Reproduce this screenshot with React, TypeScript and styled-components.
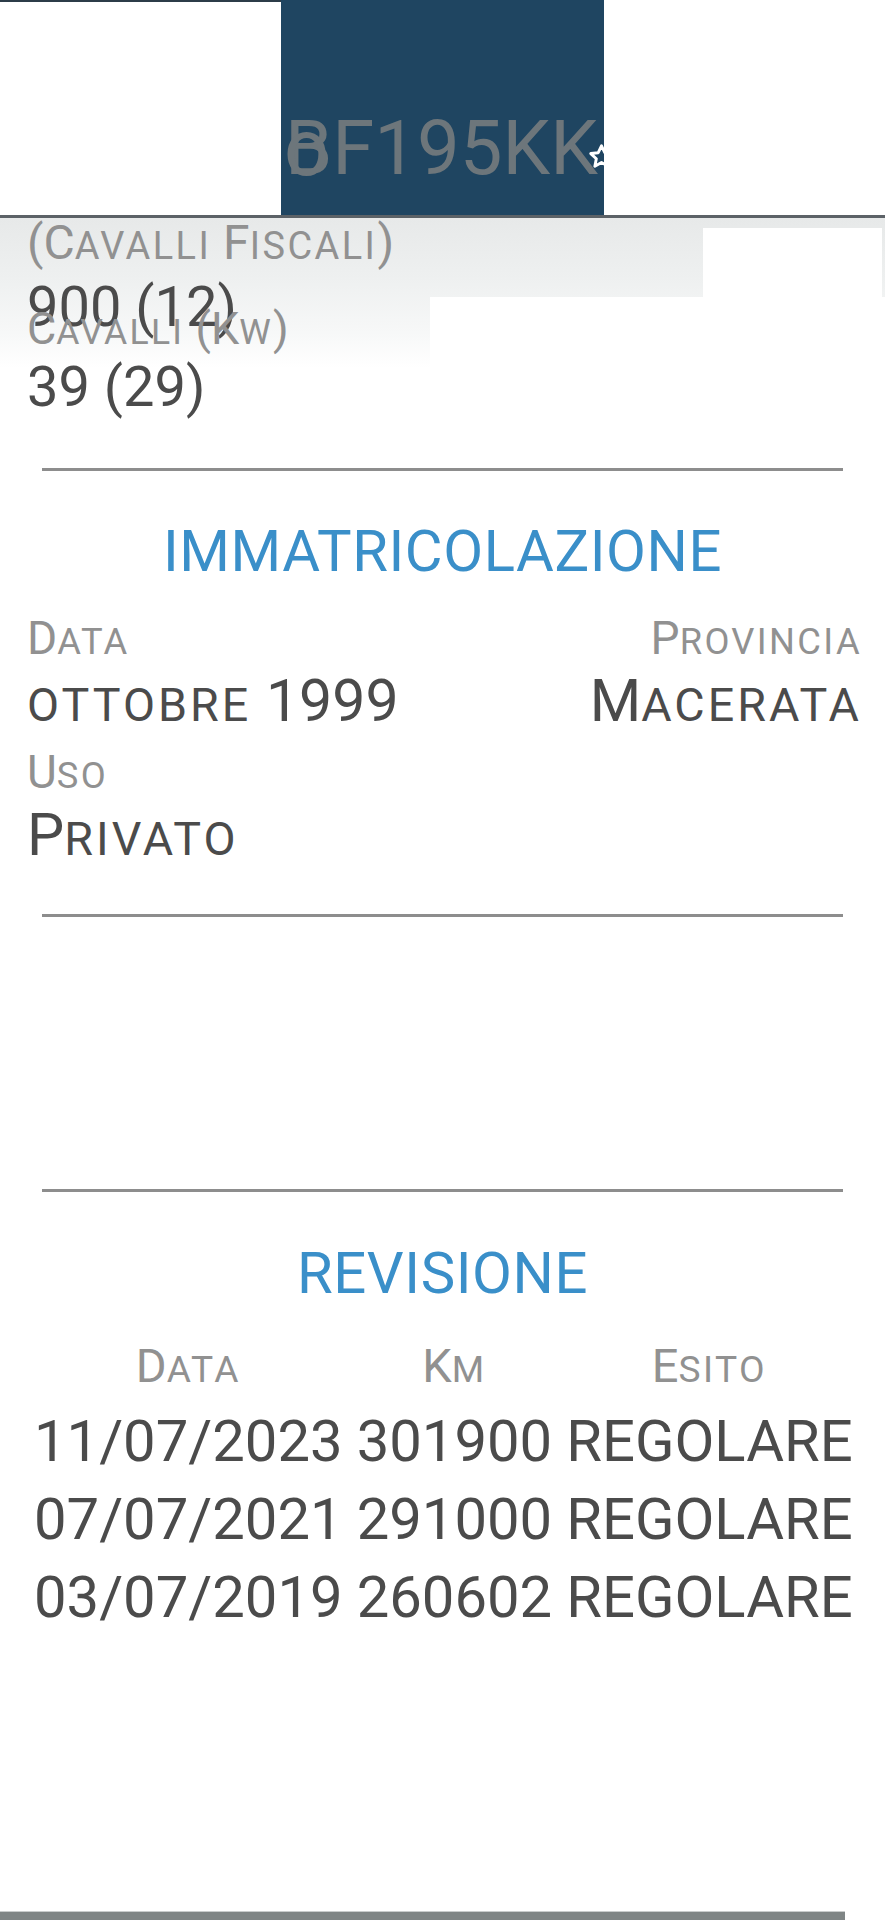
import React from 'react'
import styled, { createGlobalStyle } from 'styled-components'

const GlobalStyle = createGlobalStyle`
  html, body {
    margin: 0;
    padding: 0;
    background: #fff;
  }
  body {
    font-family: Roboto, "Noto Sans", "Liberation Sans", sans-serif;
  }
`

const Page = styled.div`
  width: 885px;
  min-height: 1920px;
  display: flex;
  flex-direction: column;
  overflow: hidden;
  background: #fff;
`

// ---- header with the plate ----
const Header = styled.header`
  display: flex;
  height: 215px;
  border-bottom: 3px solid #5c6267;
`
const HeaderSide = styled.div<{ $edge?: boolean }>`
  flex: ${p => (p.$edge ? '0 0 281px' : '1')};
  background: #fff;
  border-top: ${p => (p.$edge ? '2px solid #2c3c48' : 'none')};
`
const Plate = styled.div`
  flex: 0 0 323px;
  background: #1f4561;
  padding: 104px 0 0 4px;
  box-sizing: border-box;
  overflow: hidden;
`
const PlateText = styled.span`
  position: relative;
  display: inline-block;
  font-size: 76px;
  line-height: 89px;
  color: #6d767b;
  white-space: nowrap;
`
const Ghost = styled.span`
  position: absolute;
  left: -1px;
  top: 0;
  font-size: 79px;
  line-height: 89px;
  color: #6d767b;
`
const Star = styled.svg`
  width: 27px;
  height: 27px;
  margin-left: -10px;
  vertical-align: 4px;
`

// ---- scrolled info under the header ----
const TopInfo = styled.div`
  position: relative;
  display: flex;
  flex-direction: column;
  padding: 0 27px;
  background: linear-gradient(180deg, #e7e9e9 0px, #eef0f0 60px, #f7f8f8 115px, #fff 150px);
`
const ClipRight = styled.div`
  position: absolute;
  top: 10px;
  left: 703px;
  right: 3px;
  height: 69px;
  background: #fff;
`
const ClipLower = styled.div`
  position: absolute;
  top: 79px;
  left: 430px;
  right: 0;
  height: 70px;
  background: #fff;
`

const Label = styled.div<{ $size?: number; $lh?: number; $shift?: number }>`
  position: relative;
  font-size: ${p => p.$size ?? 46}px;
  line-height: ${p => p.$lh ?? 54}px;
  margin-top: ${p => p.$shift ?? 0}px;
  color: #919191;
  white-space: nowrap;
`
const Value = styled.div<{ $size?: number; $lh?: number; $shift?: number }>`
  position: relative;
  font-size: ${p => p.$size ?? 59}px;
  line-height: ${p => p.$lh ?? 69}px;
  margin-top: ${p => p.$shift ?? 0}px;
  color: #4b4b4b;
  white-space: nowrap;
`
const Small = styled.span`
  font-size: 0.79em;
  letter-spacing: 0.065em;
  text-transform: uppercase;
`

const Divider = styled.hr<{ $top: number }>`
  border: 0;
  height: 3px;
  background: #8d8d8d;
  margin: ${p => p.$top}px 42px 0;
  flex: none;
`

const Section = styled.section<{ $top: number }>`
  padding: ${p => p.$top}px 27px 0;
`
const Title = styled.h2`
  margin: 0;
  text-align: center;
  font-size: 58px;
  line-height: 68px;
  font-weight: 400;
  letter-spacing: 0.01em;
  color: #3a8fc9;
`
const FieldGrid = styled.div`
  display: grid;
  grid-template-columns: 1fr auto;
  row-gap: 5px;
  margin-top: 26px;
`
const Field = styled.div<{ $right?: boolean }>`
  display: flex;
  flex-direction: column;
  text-align: ${p => (p.$right ? 'right' : 'left')};
  margin-right: ${p => (p.$right ? '-4px' : '0')};
  & > div + div {
    margin-top: -3px;
  }
`
const Blank = styled.div`
  height: 272px;
  flex: none;
`

const Table = styled.table`
  margin: 31px auto 0;
  border-collapse: collapse;
  th {
    font-size: 47px;
    line-height: 55px;
    font-weight: 400;
    color: #919191;
    padding: 0 7px 5px;
  }
  td {
    font-size: 58px;
    line-height: 78px;
    color: #4b4b4b;
    padding: 0 7px;
    text-align: center;
    white-space: nowrap;
  }
`

const BottomBar = styled.div`
  margin-top: auto;
  width: 845px;
  height: 8px;
  background: #7f8585;
  border-top: 1px solid #c9cccc;
`

// lowercase runs get drawn as small capitals
const SmallCaps = ({ text }: { text: string }) => {
  const parts = text.split(/([a-zàèéìòù]+)/)
  return (
    <>
      {parts.map((part, i) =>
        /^[a-zàèéìòù]+$/.test(part) ? <Small key={i}>{part}</Small> : <React.Fragment key={i}>{part}</React.Fragment>
      )}
    </>
  )
}

const revisioni = [
  { data: '11/07/2023', km: '301900', esito: 'REGOLARE' },
  { data: '07/07/2021', km: '291000', esito: 'REGOLARE' },
  { data: '03/07/2019', km: '260602', esito: 'REGOLARE' },
]

const App = () => {
  return (
    <Page>
      <GlobalStyle />
      <Header>
        <HeaderSide $edge />
        <Plate>
          <PlateText>
            <Ghost>o</Ghost>BF195KK
            <Star viewBox="0 0 24 24">
              <path
                d="M12 2.5l2.9 6.1 6.6.8-4.9 4.6 1.3 6.6L12 17.3l-5.9 3.3 1.3-6.6-4.9-4.6 6.6-.8z"
                fill="none"
                stroke="#fff"
                strokeWidth="2.6"
                strokeLinejoin="round"
              />
            </Star>
          </PlateText>
        </Plate>
        <HeaderSide />
      </Header>

      <TopInfo>
        <ClipRight />
        <ClipLower />
        <Label $size={48} $lh={56} $shift={-3}>
          <SmallCaps text="(Cavalli Fiscali)" />
        </Label>
        <Value $size={56} $lh={66}>900 (12)</Value>
        <Label $size={45} $lh={52} $shift={-37}>
          <SmallCaps text="Cavalli (Kw)" />
        </Label>
        <Value $size={56} $lh={66} $shift={-4}>39 (29)</Value>
      </TopInfo>

      <Divider $top={48} />

      <Section $top={46}>
        <Title>IMMATRICOLAZIONE</Title>
        <FieldGrid>
          <Field>
            <Label><SmallCaps text="Data" /></Label>
            <Value><SmallCaps text="ottobre 1999" /></Value>
          </Field>
          <Field $right>
            <Label><SmallCaps text="Provincia" /></Label>
            <Value><SmallCaps text="Macerata" /></Value>
          </Field>
          <Field>
            <Label><SmallCaps text="Uso" /></Label>
            <Value><SmallCaps text="Privato" /></Value>
          </Field>
        </FieldGrid>
      </Section>

      <Divider $top={40} />
      <Blank />
      <Divider $top={0} />

      <Section $top={47}>
        <Title>REVISIONE</Title>
        <Table>
          <thead>
            <tr>
              <th><SmallCaps text="Data" /></th>
              <th><SmallCaps text="Km" /></th>
              <th><SmallCaps text="Esito" /></th>
            </tr>
          </thead>
          <tbody>
            {revisioni.map(r => (
              <tr key={r.data}>
                <td>{r.data}</td>
                <td>{r.km}</td>
                <td>{r.esito}</td>
              </tr>
            ))}
          </tbody>
        </Table>
      </Section>

      <BottomBar />
    </Page>
  )
}

export default App
